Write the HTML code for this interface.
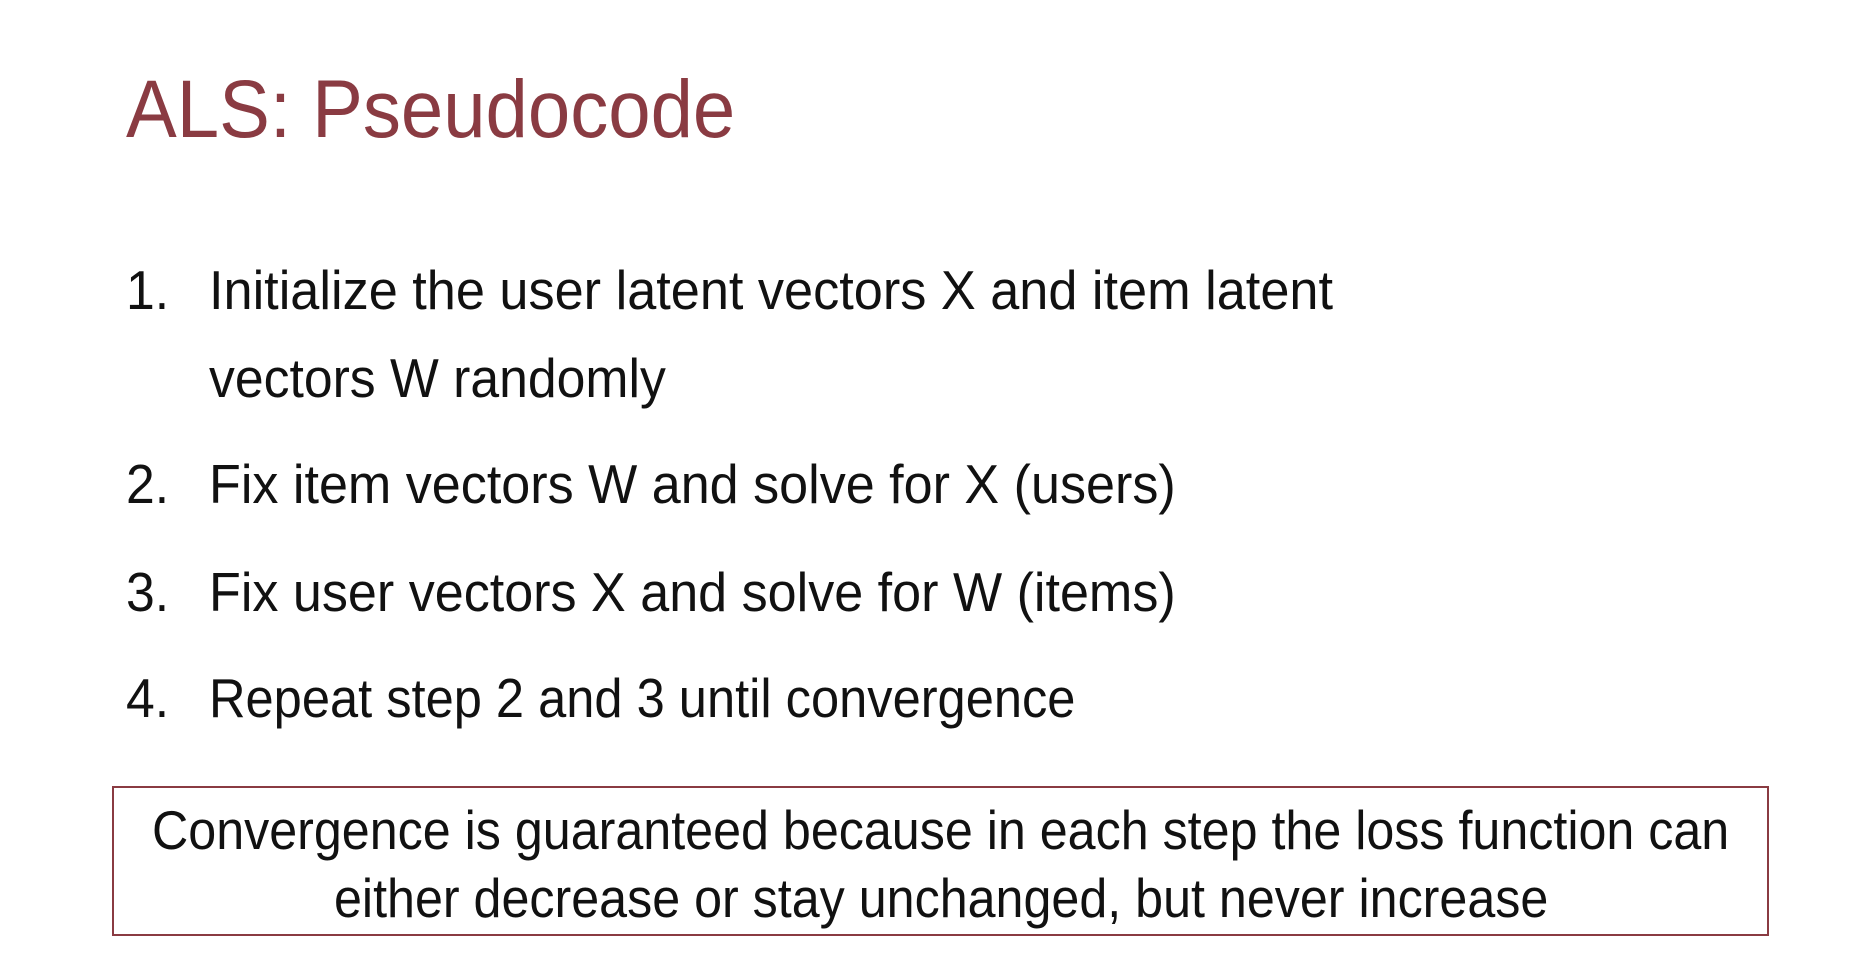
<!DOCTYPE html>
<html><head><style>
body{margin:0;width:1876px;height:956px;background:#fff;position:relative;overflow:hidden;font-family:"Liberation Sans",sans-serif;}
.t{position:absolute;white-space:nowrap;line-height:1;transform-origin:0 0;}
.i{font-size:55px;color:#111;transform:scaleX(0.94);}
.b{font-size:55px;color:#111;transform:scaleX(0.913);}
</style></head><body>
<div class="t" style="left:126px;top:69px;font-size:82px;color:#8a3b42;transform:scaleX(0.928)">ALS: Pseudocode</div>
<div class="t i" style="left:126px;top:263px">1.</div>
<div class="t i" style="left:209px;top:263px;transform:scaleX(0.95)">Initialize the user latent vectors X and item latent</div>
<div class="t i" style="left:209px;top:351px">vectors W randomly</div>
<div class="t i" style="left:126px;top:457px">2.</div>
<div class="t i" style="left:209px;top:457px;transform:scaleX(0.947)">Fix item vectors W and solve for X (users)</div>
<div class="t i" style="left:126px;top:565px">3.</div>
<div class="t i" style="left:209px;top:565px;transform:scaleX(0.947)">Fix user vectors X and solve for W (items)</div>
<div class="t i" style="left:126px;top:671px">4.</div>
<div class="t i" style="left:209px;top:671px;transform:scaleX(0.92)">Repeat step 2 and 3 until convergence</div>
<div style="position:absolute;left:112px;top:786px;width:1657px;height:150px;border:2px solid #8a3b42;box-sizing:border-box;"></div>
<div class="t b" style="left:152px;top:803px">Convergence is guaranteed because in each step the loss function can</div>
<div class="t b" style="left:334px;top:871px">either decrease or stay unchanged, but never increase</div>
</body></html>
